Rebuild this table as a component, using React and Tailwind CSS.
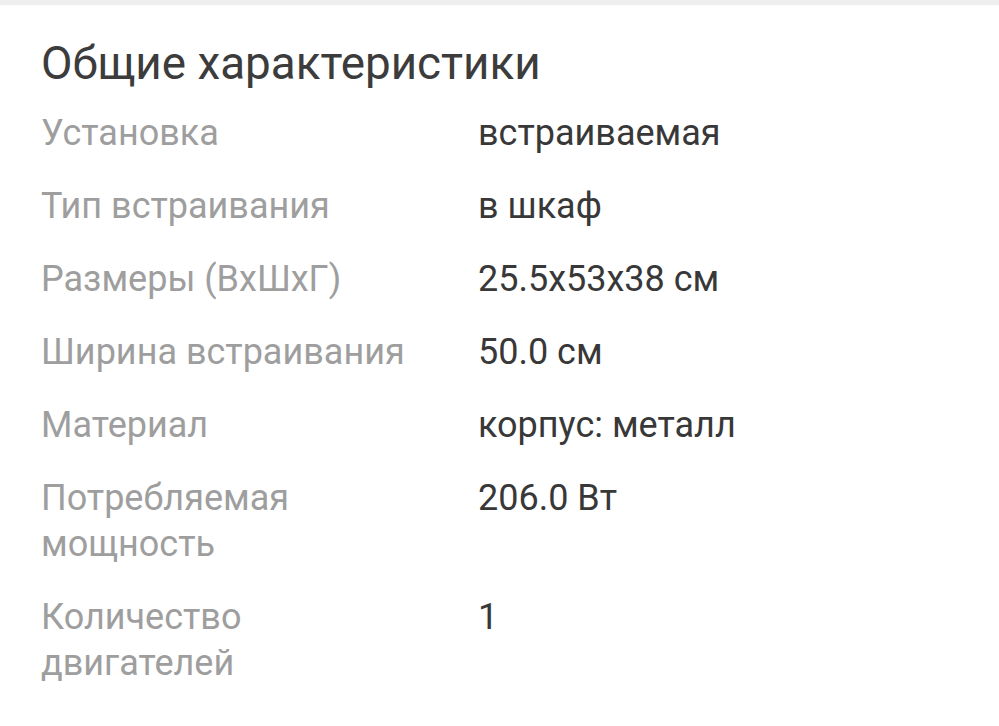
import React from "react";

const specs = [
  { label: "Установка", value: "встраиваемая" },
  { label: "Тип встраивания", value: "в шкаф" },
  { label: "Размеры (ВхШхГ)", value: "25.5x53x38 см" },
  { label: "Ширина встраивания", value: "50.0 см" },
  { label: "Материал", value: "корпус: металл" },
  { label: "Потребляемая мощность", value: "206.0 Вт" },
  { label: "Количество двигателей", value: "1" },
];

export default function App() {
  return (
    <div className="min-h-[726px] w-[999px] bg-white font-['Roboto',sans-serif]">
      {/* top divider strip */}
      <div className="h-[5px] bg-[#eeeeee]" />

      <div className="pl-[41px] pt-[35px]">
        <h2 className="text-[45.8px] leading-[48px] font-normal text-[#3c3c3c]">
          Общие характеристики
        </h2>

        <dl className="mt-[22px] flex flex-col gap-[27px]">
          {specs.map(({ label, value }) => (
            <div key={label} className="flex text-[36px] leading-[46px]">
              <dt className="w-[390px] mr-[47px] text-[#9e9e9e]">{label}</dt>
              <dd className="text-[#383838]">{value}</dd>
            </div>
          ))}
        </dl>
      </div>
    </div>
  );
}
